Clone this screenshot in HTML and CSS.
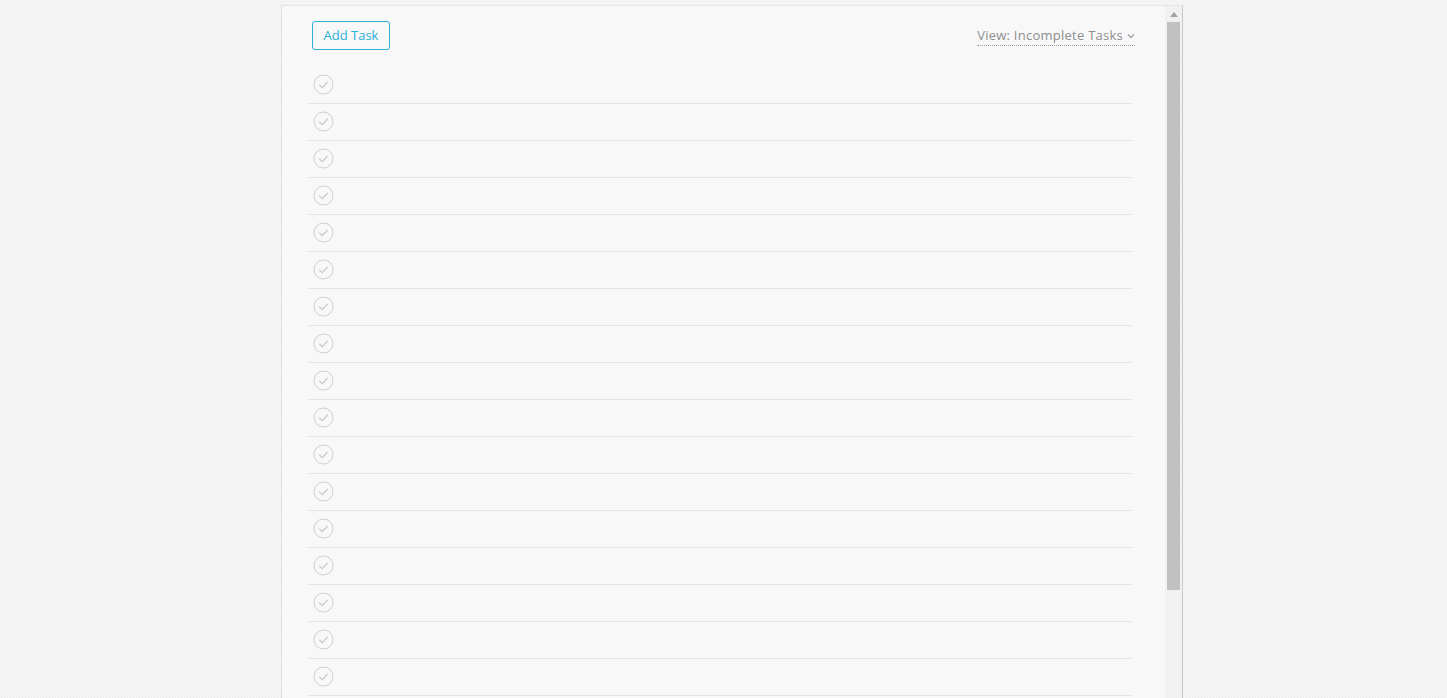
FILE: index.html
```html
<!DOCTYPE html>
<html>
<head>
<meta charset="utf-8">
<link rel="stylesheet" href="styles.css">
</head>
<body>
<div class="panel">
  <div class="content">
    <div class="header">
      <button class="add-btn">Add Task</button>
      <div class="view">View: Incomplete Tasks <svg class="chev" width="8" height="6" viewBox="0 0 8 6"><path d="M1 1.5 L4 4.5 L7 1.5" fill="none" stroke="#999" stroke-width="1.1"/></svg></div>
    </div>
    <ul class="tasks" id="tasks"></ul>
  </div>
  <div class="scrollbar">
    <div class="arrow"></div>
    <div class="thumb"></div>
  </div>
</div>
<script>
var ul = document.getElementById('tasks');
for (var i = 0; i < 18; i++) {
  var li = document.createElement('li');
  li.className = 'task';
  li.innerHTML = '<svg class="check" width="21" height="21" viewBox="0 0 21 21"><circle cx="10.5" cy="10.5" r="9.5" fill="none" stroke="#cfcfcf" stroke-width="1"/><path d="M6.3 10.8 L9.2 13.6 L14.6 8" fill="none" stroke="#c8c8c8" stroke-width="1.2"/></svg>';
  ul.appendChild(li);
}
</script>
</body>
</html>
```
FILE: styles.css
```css
html, body {
  margin: 0;
  padding: 0;
  height: 100%;
  overflow: hidden;
}
body {
  background-color: #f4f4f4;
  background-image: radial-gradient(#ededed 0.6px, transparent 0.7px);
  background-size: 3px 3px;
  font-family: "Open Sans", "Liberation Sans", sans-serif;
}
.panel {
  width: 900px;
  margin: 5px 0 0 281px;
  height: calc(100vh - 6px);
  overflow: hidden;
  background: #f8f8f8;
  border-left: 1px solid #e2e2e2;
  border-top: 1px solid #e6e6e6;
  border-right: 1px solid #c9c9c9;
  display: flex;
}
.content {
  flex: 1;
  overflow: hidden;
  padding: 0 33px 0 26px;
}
.header {
  display: flex;
  justify-content: space-between;
  align-items: flex-start;
  height: 61px;
  padding: 15px 0 0 4px;
  box-sizing: border-box;
}
.add-btn {
  font-family: "Open Sans", "Liberation Sans", sans-serif;
  font-size: 13px;
  color: #2ab3d6;
  background: transparent;
  border: 1px solid #2ab3d6;
  border-radius: 3px;
  height: 29px;
  width: 78px;
  padding: 0;
  line-height: 27px;
}
.view {
  margin-top: 4px;
  margin-right: -3px;
  font-size: 13px;
  letter-spacing: 0.25px;
  color: #8e8e8e;
  border-bottom: 1px dotted #999;
  line-height: 20px;
  display: flex;
  align-items: center;
  gap: 4px;
}
.chev { margin-top: 1px; }
.tasks {
  list-style: none;
  margin: 0;
  padding: 0;
}
.task {
  height: 36px;
  box-sizing: content-box;
  border-bottom: 1px solid #e4e4e4;
  display: flex;
  align-items: center;
  padding-left: 5px;
}
.check { display: block; margin-bottom: 2px; }
.scrollbar {
  width: 17px;
  background: #f1f1f1;
  display: flex;
  flex-direction: column;
  align-items: center;
}
.arrow {
  margin-top: 6px;
  width: 0;
  height: 0;
  border-left: 4px solid transparent;
  border-right: 4px solid transparent;
  border-bottom: 5px solid #a3a3a3;
}
.thumb {
  margin-top: 5px;
  width: 13px;
  height: 568px;
  background: #c1c1c1;
}
```
